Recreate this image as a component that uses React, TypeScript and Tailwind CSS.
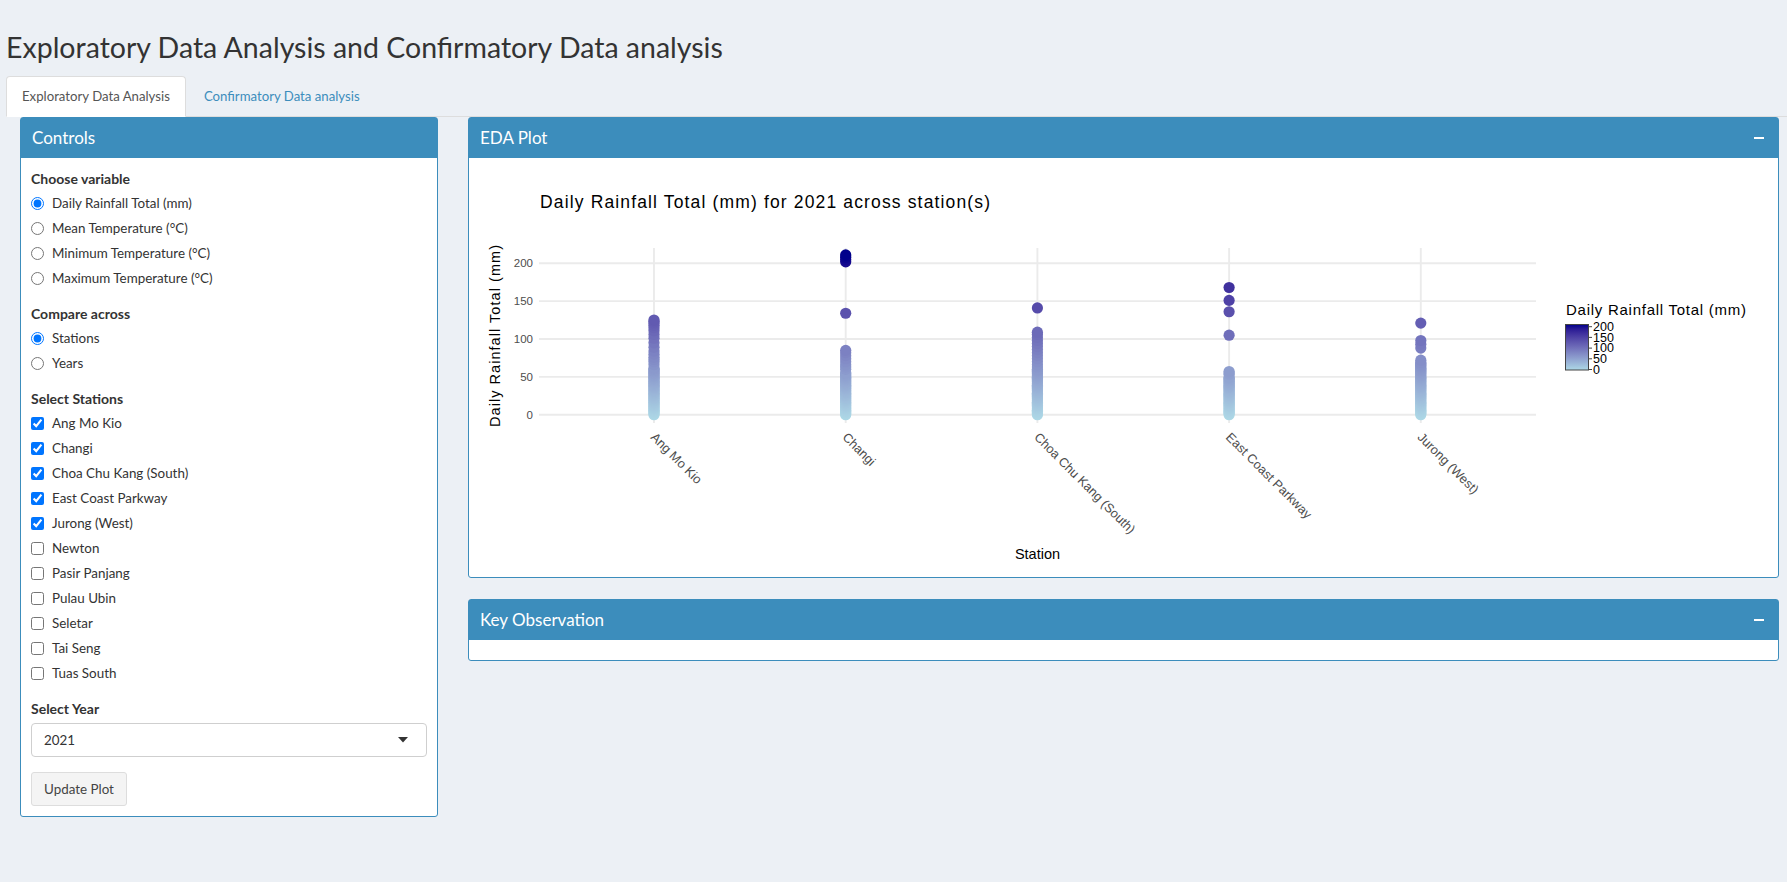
import React from "react";

const STATIONS = [
  "Ang Mo Kio",
  "Changi",
  "Choa Chu Kang (South)",
  "East Coast Parkway",
  "Jurong (West)",
];

function range(a: number, b: number, step: number): number[] {
  const r: number[] = [];
  for (let v = a; v <= b + 1e-9; v += step) r.push(+v.toFixed(2));
  return r;
}

const DATA: number[][] = [
  [...range(0, 62, 1.5), 66, 70, 73, 76, 80, 84, 89, 95, 101, 106, 111, 115, 118, 121, 123, 125],
  [...range(0, 56, 1.5), 60, 63, 66, 70, 74, 78, 82, 85, 134, 202, 205, 208, 211],
  [...range(0, 60, 1.5), 63, 66, 70, 74, 78, 82, 86, 90, 94, 98, 102, 106, 109, 141],
  [...range(0, 50, 1.5), 53, 55, 57, 105, 136, 151, 168],
  [...range(0, 70, 1.5), 72, 88, 93, 98, 121],
];

const VMAX = 211;

function hexToRgb(h: string): number[] {
  const n = parseInt(h.slice(1), 16);
  return [(n >> 16) & 255, (n >> 8) & 255, n & 255];
}
function toLin(c: number) {
  c /= 255;
  return c <= 0.04045 ? c / 12.92 : Math.pow((c + 0.055) / 1.055, 2.4);
}
function fromLin(c: number) {
  const v = c <= 0.0031308 ? 12.92 * c : 1.055 * Math.pow(c, 1 / 2.4) - 0.055;
  return Math.max(0, Math.min(255, Math.round(v * 255)));
}
function rgbToLab(rgb: number[]) {
  const [r, g, b] = rgb.map(toLin);
  const X = (0.4124 * r + 0.3576 * g + 0.1805 * b) / 0.95047;
  const Y = 0.2126 * r + 0.7152 * g + 0.0722 * b;
  const Z = (0.0193 * r + 0.1192 * g + 0.9505 * b) / 1.08883;
  const f = (t: number) => (t > 0.008856 ? Math.cbrt(t) : 7.787 * t + 16 / 116);
  const fx = f(X), fy = f(Y), fz = f(Z);
  return [116 * fy - 16, 500 * (fx - fy), 200 * (fy - fz)];
}
function labToRgb(lab: number[]) {
  const [L, a, b] = lab;
  const fy = (L + 16) / 116;
  const fx = fy + a / 500;
  const fz = fy - b / 200;
  const finv = (t: number) => (t * t * t > 0.008856 ? t * t * t : (t - 16 / 116) / 7.787);
  const X = 0.95047 * finv(fx);
  const Y = finv(fy);
  const Z = 1.08883 * finv(fz);
  const r = 3.2406 * X - 1.5372 * Y - 0.4986 * Z;
  const g = -0.9689 * X + 1.8758 * Y + 0.0415 * Z;
  const bb = 0.0557 * X - 0.204 * Y + 1.057 * Z;
  return `rgb(${fromLin(r)},${fromLin(g)},${fromLin(bb)})`;
}
const LOW = rgbToLab(hexToRgb("#ADD8E6"));
const HIGH = rgbToLab(hexToRgb("#00008B"));
function colorFor(v: number) {
  const t = Math.max(0, Math.min(1, v / VMAX));
  return labToRgb([0, 1, 2].map((i) => LOW[i] + (HIGH[i] - LOW[i]) * t));
}

const yPx = (v: number) => 256.7 - v * 0.757;
const gx = (i: number) => 185 + i * 191.7;

function Plot() {
  const plotFont = "'Liberation Sans', Arial, sans-serif";
  const stops = [0, 0.1, 0.2, 0.3, 0.4, 0.5, 0.6, 0.7, 0.8, 0.9, 1];
  return (
    <svg width={1309} height={419} className="block">
      <defs>
        <linearGradient id="cbar" x1="0" y1="1" x2="0" y2="0">
          {stops.map((s) => (
            <stop key={s} offset={s} stopColor={colorFor(s * VMAX)} />
          ))}
        </linearGradient>
      </defs>
      <text x={71} y={50} fontFamily={plotFont} fontSize={17.5} fill="#000" textLength={450}>
        Daily Rainfall Total (mm) for 2021 across station(s)
      </text>
      {[0, 50, 100, 150, 200].map((v) => (
        <g key={v}>
          <line x1={70} x2={1067} y1={yPx(v)} y2={yPx(v)} stroke="#ebebeb" strokeWidth={1.9} />
          <text
            x={64}
            y={yPx(v) + 4}
            textAnchor="end"
            fontFamily={plotFont}
            fontSize={11.5}
            fill="#4d4d4d"
          >
            {v}
          </text>
        </g>
      ))}
      {STATIONS.map((s, i) => (
        <line key={s} x1={gx(i)} x2={gx(i)} y1={90} y2={265} stroke="#ebebeb" strokeWidth={1.9} />
      ))}
      {DATA.map((vals, i) =>
        vals.map((v, j) => (
          <circle key={`${i}-${j}`} cx={gx(i)} cy={yPx(v)} r={5.6} fill={colorFor(v)} />
        ))
      )}
      {STATIONS.map((s, i) => (
        <text
          key={s}
          x={gx(i) - 4}
          y={280}
          transform={`rotate(45 ${gx(i) - 4} 280)`}
          fontFamily={plotFont}
          fontSize={12.8}
          fill="#4d4d4d"
        >
          {s}
        </text>
      ))}
      <text
        x={31}
        y={178}
        transform="rotate(-90 31 178)"
        textAnchor="middle"
        fontFamily={plotFont}
        fontSize={14.5}
        fill="#000"
        textLength={182}
      >
        Daily Rainfall Total (mm)
      </text>
      <text x={568.5} y={401} textAnchor="middle" fontFamily={plotFont} fontSize={14.5} fill="#000">
        Station
      </text>
      <text x={1097} y={157} fontFamily={plotFont} fontSize={15} fill="#000" textLength={180}>
        Daily Rainfall Total (mm)
      </text>
      <rect x={1096.5} y={166.5} width={23} height={45.5} fill="url(#cbar)" stroke="#444" strokeWidth={1} />
      {[200, 150, 100, 50, 0].map((v) => {
        const y = 211.5 - v * (42.8 / 200);
        return (
          <g key={v}>
            <line x1={1120} x2={1123} y1={y} y2={y} stroke="#444" strokeWidth={1} />
            <text x={1124} y={y + 4.3} fontFamily={plotFont} fontSize={12.5} fill="#000">
              {v}
            </text>
          </g>
        );
      })}
    </svg>
  );
}

function Radio({ label, name, checked }: { label: string; name: string; checked?: boolean }) {
  return (
    <label className="flex items-center h-[25px]">
      <input
        type="radio"
        name={name}
        defaultChecked={checked}
        className="m-0 w-[13px] h-[13px] accent-[#0075ff]"
      />
      <span className="ml-[8px] text-[13.4px] text-[#333]">{label}</span>
    </label>
  );
}

function Check({ label, checked }: { label: string; checked?: boolean }) {
  return (
    <label className="flex items-center h-[25px]">
      <input
        type="checkbox"
        defaultChecked={checked}
        className="m-0 w-[13px] h-[13px] accent-[#0075ff]"
      />
      <span className="ml-[8px] text-[13.4px] text-[#333]">{label}</span>
    </label>
  );
}

function BoxHeader({ title, minus }: { title: string; minus?: boolean }) {
  return (
    <div className="h-[40px] bg-[#3c8dbc] flex items-center justify-between pl-[11px] pr-[14px]">
      <span className="text-white text-[17px]">{title}</span>
      {minus && <span className="block w-[10px] h-[2px] bg-white" />}
    </div>
  );
}

function GroupLabel({ children, first, mb }: { children: React.ReactNode; first?: boolean; mb?: string }) {
  return (
    <div
      className={`h-[20px] flex items-center font-bold text-[14px] ${first ? "" : "mt-[12px]"} ${
        mb === "5" ? "mb-[5px]" : "mb-[3px]"
      }`}
    >
      {children}
    </div>
  );
}

export default function App() {
  return (
    <div className="w-full min-h-screen h-[882px] bg-[#ecf0f5] font-['Lato',sans-serif] text-[#333] overflow-hidden">
      <div className="pt-[31px] pl-[6px]">
        <h2 className="h-[33px] leading-[33px] text-[28.5px] font-normal text-[#333] whitespace-nowrap">
          Exploratory Data Analysis and Confirmatory Data analysis
        </h2>
        <div className="mt-[12px] h-[41px] flex border-b border-[#ddd]">
          <div className="h-[41px] -mb-px px-[15px] flex items-center bg-white border border-[#ddd] border-b-white rounded-t-[4px] text-[13.2px] text-[#555]">
            Exploratory Data Analysis
          </div>
          <div className="h-[41px] ml-[2px] px-[15px] flex items-center border border-transparent text-[13.2px] text-[#3c8dbc]">
            Confirmatory Data analysis
          </div>
        </div>
      </div>
      <div className="flex gap-[30px] pl-[20px]">
        <div className="w-[418px] self-start border border-[#3c8dbc] rounded-[3px] bg-white">
          <BoxHeader title="Controls" />
          <div className="px-[10px] pt-[10px] pb-[10px] flex flex-col">
            <GroupLabel first>Choose variable</GroupLabel>
            <Radio name="var" label="Daily Rainfall Total (mm)" checked />
            <Radio name="var" label="Mean Temperature (°C)" />
            <Radio name="var" label="Minimum Temperature (°C)" />
            <Radio name="var" label="Maximum Temperature (°C)" />
            <GroupLabel>Compare across</GroupLabel>
            <Radio name="cmp" label="Stations" checked />
            <Radio name="cmp" label="Years" />
            <GroupLabel>Select Stations</GroupLabel>
            <Check label="Ang Mo Kio" checked />
            <Check label="Changi" checked />
            <Check label="Choa Chu Kang (South)" checked />
            <Check label="East Coast Parkway" checked />
            <Check label="Jurong (West)" checked />
            <Check label="Newton" />
            <Check label="Pasir Panjang" />
            <Check label="Pulau Ubin" />
            <Check label="Seletar" />
            <Check label="Tai Seng" />
            <Check label="Tuas South" />
            <GroupLabel mb="5">Select Year</GroupLabel>
            <div className="h-[34px] border border-[#cfcfcf] rounded-[4px] flex items-center justify-between pl-[12px] pr-[18px] text-[13.4px] text-[#333]">
              <span>2021</span>
              <svg width="10" height="6" viewBox="0 0 10 6">
                <polygon points="0,0 10,0 5,5.5" fill="#333" />
              </svg>
            </div>
            <div className="mt-[15px]">
              <button className="h-[34px] px-[12px] bg-[#f4f4f4] border border-[#ddd] rounded-[3px] text-[#444] text-[13.4px]">
                Update Plot
              </button>
            </div>
          </div>
        </div>
        <div className="w-[1311px] flex flex-col">
          <div className="border border-[#3c8dbc] rounded-[3px] bg-white">
            <BoxHeader title="EDA Plot" minus />
            <div className="h-[419px]">
              <Plot />
            </div>
          </div>
          <div className="mt-[21px] border border-[#3c8dbc] rounded-[3px] bg-white">
            <BoxHeader title="Key Observation" minus />
            <div className="h-[20px]" />
          </div>
        </div>
      </div>
    </div>
  );
}
